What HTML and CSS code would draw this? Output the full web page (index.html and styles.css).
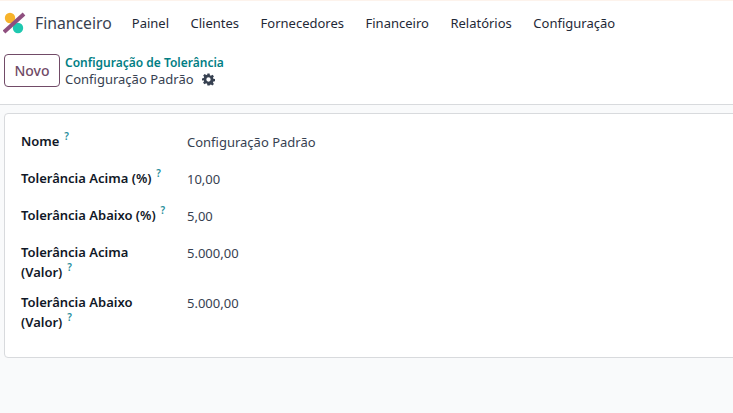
FILE: index.html
```html
<!DOCTYPE html>
<html lang="pt-BR">
<head>
  <meta charset="UTF-8" />
  <title>Configuração de Tolerância</title>
  <link rel="stylesheet" href="styles.css">
</head>
<body>
  <header class="navbar">
    <svg class="logo" width="24" height="24" viewBox="0 0 24 24">
      <circle cx="7" cy="7" r="5.2" fill="#f7b32b"/>
      <circle cx="15" cy="17" r="5.2" fill="#1fc8b0"/>
      <path d="M1 21 L21 3" stroke="#8f4f7f" stroke-width="4"/>
    </svg>
    <span class="app-name">Financeiro</span>
    <nav class="menu">
      <a>Painel</a>
      <a>Clientes</a>
      <a>Fornecedores</a>
      <a>Financeiro</a>
      <a>Relatórios</a>
      <a>Configuração</a>
    </nav>
  </header>

  <div class="control-panel">
    <button class="new-btn">Novo</button>
    <div class="breadcrumb">
      <a>Configuração de Tolerância</a>
      <div class="current">
        Configuração Padrão
        <svg class="gear" width="13" height="13" viewBox="0 0 24 24">
          <path fill="#374151" fill-rule="evenodd" d="M10 1h4l.6 3.2 1.9.8 2.7-1.8 2.8 2.8-1.8 2.7.8 1.9 3.2.6v4l-3.2.6-.8 1.9 1.8 2.7-2.8 2.8-2.7-1.8-1.9.8L14 23h-4l-.6-3.2-1.9-.8-2.7 1.8-2.8-2.8 1.8-2.7-.8-1.9L0 14v-4l3.2-.6.8-1.9L2.2 4.8 5 2l2.7 1.8 1.9-.8zM12 8a4 4 0 1 0 0 8 4 4 0 0 0 0-8z"/>
        </svg>
      </div>
    </div>
  </div>

  <main class="content">
    <section class="sheet">
      <div class="field">
        <div class="label">Nome <sup>?</sup></div>
        <div class="value">Configuração Padrão</div>
      </div>
      <div class="field">
        <div class="label">Tolerância Acima (%) <sup>?</sup></div>
        <div class="value">10,00</div>
      </div>
      <div class="field">
        <div class="label">Tolerância Abaixo (%) <sup>?</sup></div>
        <div class="value">5,00</div>
      </div>
      <div class="field tall">
        <div class="label">Tolerância Acima<br>(Valor) <sup>?</sup></div>
        <div class="value">5.000,00</div>
      </div>
      <div class="field tall">
        <div class="label">Tolerância Abaixo<br>(Valor) <sup>?</sup></div>
        <div class="value">5.000,00</div>
      </div>
    </section>
  </main>
</body>
</html>
```

FILE: styles.css
```css
* {
  margin: 0;
  padding: 0;
  box-sizing: border-box;
}

html, body {
  height: 100%;
  overflow: hidden;
}

body {
  display: flex;
  flex-direction: column;
  font-family: "Noto Sans", sans-serif;
  font-size: 13px;
  color: #374151;
  background-color: #f9fafb;
}

.navbar {
  display: flex;
  align-items: center;
  height: 45px;
  padding-left: 3px;
  background-color: #fff;
  border-top: 1px solid #fdf3ec;
}

.logo {
  margin-right: 8px;
}

.app-name {
  font-size: 15.75px;
  margin-right: 20px;
}

.menu {
  display: flex;
  gap: 21.5px;
  color: #1f2937;
}

.control-panel {
  display: flex;
  align-items: flex-start;
  gap: 5px;
  height: 60px;
  padding: 9px 4px 0;
  background-color: #fff;
  border-bottom: 1px solid #d8dadd;
}

.new-btn {
  width: 56px;
  height: 33px;
  font-family: inherit;
  font-size: 14px;
  font-weight: 500;
  color: #714b67;
  background-color: #fff;
  border: 1px solid #714b67;
  border-radius: 4px;
}

.breadcrumb {
  line-height: 17px;
}

.breadcrumb a {
  display: block;
  font-size: 12px;
  font-weight: 600;
  color: #017e84;
}

.current {
  display: flex;
  align-items: center;
  gap: 8px;
}

.content {
  flex: 1;
  padding: 8px 0 0 4px;
}

.sheet {
  height: 245px;
  margin-right: -8px;
  padding: 16px 16px 0;
  background-color: #fff;
  border: 1px solid #d8dadd;
  border-radius: 4px;
}

.field {
  display: flex;
  height: 37px;
  line-height: 20px;
  padding-top: 2px;
}

.field.tall {
  height: 50px;
}

.label {
  width: 166px;
  margin-top: -1px;
  font-weight: 600;
  color: #111827;
}

.label sup {
  font-size: 10px;
  font-weight: 600;
  line-height: 0;
  vertical-align: 6px;
  color: #2a8f9c;
  margin-left: 1.5px;
}

.value {
  color: #374151;
}
```
